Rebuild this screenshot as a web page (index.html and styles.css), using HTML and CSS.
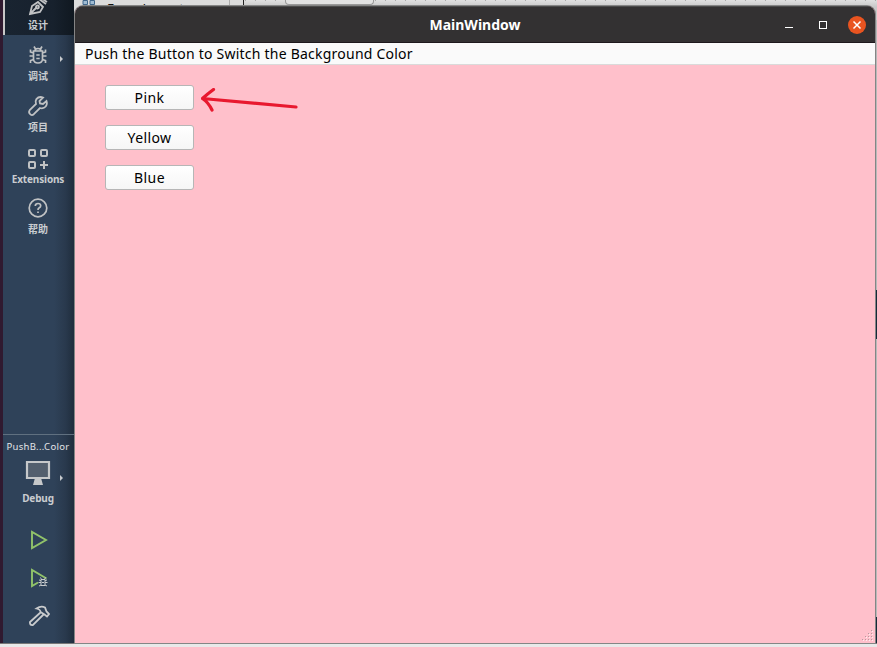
FILE: index.html
```
<!DOCTYPE html>
<html lang="zh-CN">
<head>
<meta charset="utf-8">
<title>MainWindow</title>
<link rel="stylesheet" href="styles.css">
</head>
<body>
<div class="desktop">
  <div class="edge"></div>
  <nav class="modes">
    <div class="mode design active">
      <svg width="20" height="16" viewBox="0 0 20 16"><path d="M2 14 4 6 10 2 15 7 12 12Z M2 14 9 7 M11-1 18 4 M13-2 19 2"/><circle cx="9.5" cy="7" r="1.5"/></svg>
      <span>设计</span>
    </div>
    <div class="mode debug">
      <svg width="20" height="20" viewBox="0 0 20 20"><path d="M5.500 6H14.500V14.500Q14 18 10 18T5.500 14.500Z M7 6Q7 3.500 10 3.500T13 6 M7.500 4 6 1.500 M12.500 4 14 1.500 M5.500 11H1.500 M18.500 11H14.500 M5.500 8 2.500 7V4.500 M14.500 8 17.500 7V4.500 M5.500 14.500 2.500 15.500V18 M14.500 14.500 17.500 15.500V18 M8.300 10H11.700 M8.300 13.500H11.700"/></svg>
      <span>调试</span>
      <i class="more"></i>
    </div>
    <div class="mode projects">
      <svg width="20" height="20" viewBox="0 0 20 20"><path d="M15 1.500Q11-.1 8.400 3.100Q7 5.200 8 8L1.700 14.200Q.3 16 2 18T5.800 18.200L12 12Q15.500 13 17.700 10.500Q19.600 8 18.500 5L15 8 12 7.500 11.500 5Z"/></svg>
      <span>项目</span>
    </div>
    <div class="mode extensions">
      <svg width="20" height="20" viewBox="0 0 20 20"><path d="M16 12V20 M12 16H20"/><rect x="1" y="1" width="6" height="6" rx="1"/><rect x="13" y="1" width="6" height="6" rx="1"/><rect x="1" y="13" width="6" height="6" rx="1"/></svg>
      <span>Extensions</span>
    </div>
    <div class="mode help">
      <svg width="20" height="20" viewBox="0 0 20 20"><circle cx="10" cy="10" r="8.800"/><path d="M7.300 8Q7.300 5.500 10 5.500T12.700 7.800Q12.700 9.200 11 10 10 10.500 10 12 M10 13.500V15"/></svg>
      <span>帮助</span>
    </div>
    <div class="kit">
      <span class="project">PushB...Color</span>
      <svg width="26" height="26" viewBox="0 0 26 26"><path class="screen" d="M2 2H24V18H2Z"/><path class="stand" d="M10 18H16L18 25H8Z"/></svg>
      <span class="config">Debug</span>
      <i class="more"></i>
    </div>
    <div class="actions">
      <svg class="run" width="22" height="22" viewBox="0 0 22 22"><path d="M4 3V19L18 11Z"/></svg>
      <svg class="run" width="22" height="22" viewBox="0 0 22 22"><path d="M10 15.500 4 19V3L18.500 11.500"/><path class="bug" d="M13 12.500H17V18.500H13Z M13.500 12.500 12.500 10.500 M16.500 12.500 17.500 10.500 M13 15.500H10.500 M19.500 15.500H17 M13 13.500 11 13 M17 13.500 19 13 M13 18 11 19 M17 18 19 19 M14 15.500H16"/></svg>
      <svg class="build" width="22" height="22" viewBox="0 0 22 22"><path d="M8.500 3.500Q13 .5 17 2.500L18.500 6.500 21 9 19 11.500 16.500 9.500 12.500 7Q12.500 4.500 8.500 3.500Z M12.500 7.500 2 17Q1.500 20.500 5 20L15.500 9.500"/></svg>
    </div>
  </nav>
  <div class="backdrop">
    <div class="tools">
      <svg width="14" height="6" viewBox="0 0 14 6"><path d="M1 .5H5.500V4.500H1Z M8 .5H12.500V4.500H8Z"/></svg>
      <span class="caption">Form Layout</span>
      <i class="divider"></i>
    </div>
    <div class="canvas"><i class="stub"></i></div>
  </div>
  <div class="footer"></div>
  <i class="peek"></i>
  <i class="peek low"></i>
</div>
<section class="window">
  <header class="titlebar">
    <h1>MainWindow</h1>
    <div class="controls">
      <i class="minimize"></i>
      <i class="maximize"></i>
      <svg width="18" height="18" viewBox="0 0 18 18"><circle cx="9" cy="9" r="9"/><path d="M5.500 5.500 12.500 12.500 M12.500 5.500 5.500 12.500"/></svg>
    </div>
  </header>
  <div class="menubar"><span>Push the Button to Switch the Background Color</span></div>
  <main>
    <button class="pink">Pink</button>
    <button class="yellow">Yellow</button>
    <button class="blue">Blue</button>
    <svg class="arrow" width="100" height="26" viewBox="0 0 100 26"><path d="M12.500 1.500Q7 5.500 1.500 10.500Q7.500 14.500 11 22 M1.500 10.500 95 19"/></svg>
    <svg class="grip" width="12" height="12" viewBox="0 0 12 12"><path class="light" d="M10 1h1v1h-1z M7 4h1v1h-1z M10 4h1v1h-1z M4 7h1v1h-1z M7 7h1v1h-1z M10 7h1v1h-1z M1 10h1v1h-1z M4 10h1v1h-1z M7 10h1v1h-1z M10 10h1v1h-1z"/><path class="dark" d="M9 0h1v1h-1z M6 3h1v1h-1z M9 3h1v1h-1z M3 6h1v1h-1z M6 6h1v1h-1z M9 6h1v1h-1z M0 9h1v1h-1z M3 9h1v1h-1z M6 9h1v1h-1z M9 9h1v1h-1z"/></svg>
  </main>
</section>
</body>
</html>
```
FILE: styles.css
```
* { box-sizing: border-box; }
body {
  margin: 0;
  width: 877px;
  height: 647px;
  overflow: hidden;
  position: relative;
  font-family: "Noto Sans", "Noto Sans CJK SC", sans-serif;
}
svg { display: block; fill: none; }

.desktop {
  display: grid;
  grid-template: 643px 4px / 3px 71px 1fr;
  height: 647px;
  background: #b9b9b9;
}
.edge { background: #301a30; }
.footer { grid-column: 1 / -1; background: #e9e9e9; border-top: 1px solid #777; }

.modes {
  display: flex;
  flex-direction: column;
  background: linear-gradient(90deg, #2f4259 0, #2f4259 72%, #29394d 88%, #1f2d3d 100%);
  color: #c9ccd0;
  font-size: 10px;
  font-weight: 700;
  line-height: 14px;
}
.mode {
  position: relative;
  height: 51px;
  display: flex;
  flex-direction: column;
  align-items: center;
  padding-right: 1px;
}
.mode svg { stroke: #c0c2c4; stroke-width: 1.8; overflow: visible; }
.mode span { white-space: nowrap; margin-top: 4px; }
.mode.design {
  height: 35px;
  overflow: hidden;
  background: linear-gradient(90deg, #192431 0, #17212d 70%, #101820 100%);
  border-left: 2px solid #c8c8c8;
  padding-right: 3px;
}
.mode.design span { margin-top: 2px; }
.debug { padding-top: 10px; }
.debug svg { stroke-width: 1.7; }
.projects { padding-top: 10px; }
.extensions { padding-top: 12px; height: 52px; }
.mode.extensions span { margin-top: 3px; letter-spacing: -0.15px; }
.mode.extensions svg { stroke-width: 2; }
.help { padding-top: 9px; }
.help svg { stroke-width: 1.7; }
.more {
  position: absolute;
  left: 57px;
  top: 21px;
  border-left: 3.5px solid #c8cbce;
  border-top: 3.5px solid transparent;
  border-bottom: 3.5px solid transparent;
}

.kit {
  position: relative;
  margin-top: 194px;
  height: 86px;
  border-top: 1px solid #607080;
  display: flex;
  flex-direction: column;
  align-items: center;
  padding: 5px 1px 0 0;
}
.project { font-size: 9.5px; font-weight: 400; letter-spacing: 0.28px; white-space: nowrap; color: #e2e4e7; }
.kit svg { margin-top: 6px; }
.screen { fill: #535f6e; stroke: #c6c8ca; stroke-width: 2.2; }
.stand { fill: #c6c8ca; }
.config { margin-top: 5px; letter-spacing: -0.15px; }
.kit .more { top: 40px; }

.actions {
  display: flex;
  flex-direction: column;
  align-items: center;
  gap: 16px;
  padding: 9px 0 0 1px;
}
.run { stroke: #91c36a; stroke-width: 1.9; }
.run .bug { stroke: #c7cacc; stroke-width: 1; }
.build { stroke: #c9cbcd; stroke-width: 1.8; }

.backdrop { display: flex; height: 20px; background: #dcdcdc; }
.tools {
  display: flex;
  align-items: flex-start;
  width: 170px;
  padding-left: 8px;
  border-right: 1px solid #222;
}
.tools svg { fill: #9fbbd2; stroke: #41678b; flex: none; }
.caption { margin: 0 0 0 11px; font-size: 13px; line-height: 16px; color: #111; width: 108px; }
.divider { border-left: 1px solid #aaa; height: 8px; margin-left: 14px; }
.canvas { flex: 1; background: repeating-linear-gradient(90deg, #aaa 0 1px, transparent 1px 10px) 1px 0 / 100% 1px no-repeat, linear-gradient(#e0e0e0, #c8c8c8 7px); }
.stub { display: block; margin-left: 41px; width: 89px; height: 5px; border: 1px solid #999; border-top: 0; border-radius: 0 0 4px 4px; background: #e2e2e2; }
.peek { position: absolute; right: 0; top: 290px; width: 3px; height: 49px; background: #172838; }
.peek.low { top: 617px; height: 26px; }

.window {
  position: absolute;
  left: 75px;
  top: 6px;
  width: 800px;
  height: 637px;
  display: flex;
  flex-direction: column;
  border-radius: 8px 8px 0 0;
  overflow: hidden;
  background: #ffc0cb;
  box-shadow: 0 0 0 1px #858585;
}
.titlebar {
  height: 37px;
  display: grid;
  grid-template-columns: 1fr auto 1fr;
  align-items: center;
  background: #333132;
  border-top: 1px solid #4c4c4c;
  border-bottom: 1px solid #1e191d;
  color: #fff;
}
.titlebar h1 { grid-column: 2; margin: 0; font-size: 14px; line-height: 20px; font-weight: 700; }
.controls { display: flex; justify-content: flex-end; align-items: center; padding-right: 9px; }
.minimize { width: 8px; height: 1px; background: #fff; margin: 5px 26px 0 0; }
.maximize { width: 8px; height: 8px; border: 1px solid #fff; margin-right: 21px; }
.controls circle { fill: #e95420; }
.controls path { stroke: #fff; stroke-width: 1.5; }

.menubar {
  height: 22px;
  padding-left: 10px;
  background: #fafafa;
  border-bottom: 1px solid #dadada;
  color: #000;
  font-size: 14px;
  letter-spacing: 0.23px;
  line-height: 22px;
  white-space: nowrap;
}
main {
  position: relative;
  flex: 1;
  display: flex;
  flex-direction: column;
  align-items: flex-start;
  gap: 15px;
  padding: 20px 30px;
}
button {
  width: 89px;
  height: 25px;
  padding: 0;
  border: 1px solid #b6b6b6;
  border-radius: 3px;
  background: linear-gradient(#fff, #f6f6f6);
  color: #000;
  font: 14px/22px "Noto Sans", sans-serif;
  letter-spacing: 0.4px;
}
.arrow { position: absolute; left: 126px; top: 23px; stroke: #e8192f; stroke-width: 3.2; stroke-linecap: round; }
.grip { position: absolute; right: 1px; bottom: 1px; }
.grip .light { fill: #ffecef; }
.grip .dark { fill: #b69a9f; }
```
